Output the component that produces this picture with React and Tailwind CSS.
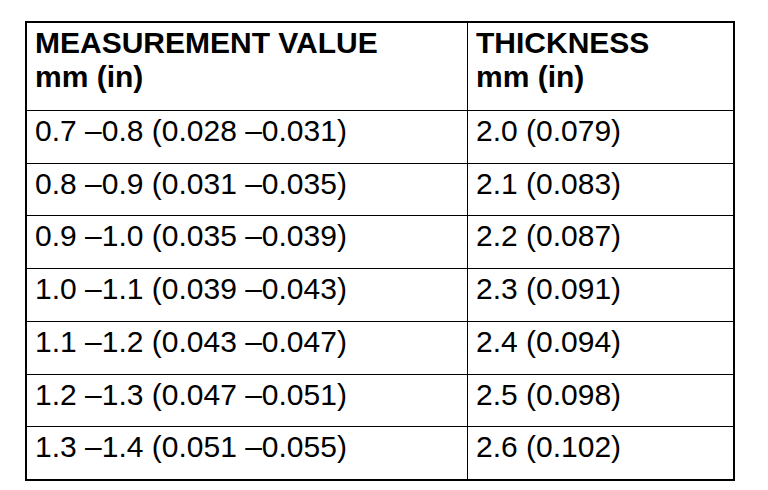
const rows = [
    ["0.7 \u20130.8 (0.028 \u20130.031)", "2.0 (0.079)"],
    ["0.8 \u20130.9 (0.031 \u20130.035)", "2.1 (0.083)"],
    ["0.9 \u20131.0 (0.035 \u20130.039)", "2.2 (0.087)"],
    ["1.0 \u20131.1 (0.039 \u20130.043)", "2.3 (0.091)"],
    ["1.1 \u20131.2 (0.043 \u20130.047)", "2.4 (0.094)"],
    ["1.2 \u20131.3 (0.047 \u20130.051)", "2.5 (0.098)"],
    ["1.3 \u20131.4 (0.051 \u20130.055)", "2.6 (0.102)"],
];

export default function App() {
    return (
        <div
            className="w-[768px] h-[490px] bg-white pl-[25px] pt-[21px] text-black"
            style={{ fontFamily: '"Liberation Sans", Arial, sans-serif' }}
        >
            <div className="w-[710px] h-[460px] border-2 border-black flex flex-col">
                {/* header */}
                <div className="grid grid-cols-[441px_1fr] h-[88px] border-b border-black shrink-0">
                    <div className="border-r border-black px-2 pt-[3px] text-[30px] leading-[34px] font-bold">
                        <div>MEASUREMENT VALUE</div>
                        <div>mm (in)</div>
                    </div>
                    <div className="px-2 pt-[3px] text-[30px] leading-[34px] font-bold">
                        <div>THICKNESS</div>
                        <div>mm (in)</div>
                    </div>
                </div>

                {rows.map(([value, thick], i) => (
                    <div
                        key={value}
                        className={
                            "grid grid-cols-[441px_1fr] flex-1 " +
                            (i < rows.length - 1 ? "border-b border-black" : "")
                        }
                    >
                        <div className="border-r border-black px-2 pt-[3px] text-[30px] leading-[34px]">
                            {value}
                        </div>
                        <div className="px-2 pt-[3px] text-[30px] leading-[34px]">{thick}</div>
                    </div>
                ))}
            </div>
        </div>
    );
}
